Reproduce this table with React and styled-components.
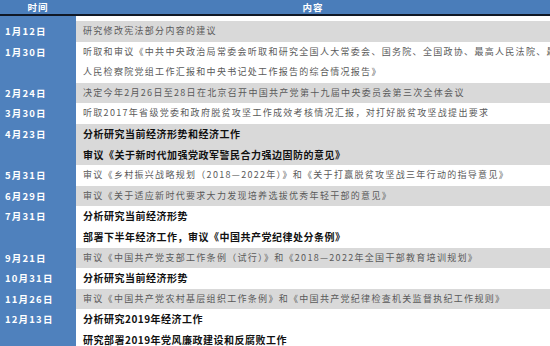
import styled, { createGlobalStyle } from "styled-components";

/** 会议内容一览表 */

const GlobalStyle = createGlobalStyle`
    html, body {
        margin: 0;
        padding: 0;
        background: #fff;
    }
    body {
        font-family: "Noto Sans CJK SC", "Liberation Sans", sans-serif;
    }
`;

const BLUE = "#4f81bd";
const DATE_W = "76px";
const LINE = "20.6px";

/**표 전체 틀 */
const Table = styled.div`
    width: 550px;
    height: 346px;
    overflow: hidden;
    display: flex;
    flex-direction: column;
`;

const HeaderRow = styled.div`
    display: grid;
    grid-template-columns: ${DATE_W} 1fr;
    height: 14px;
    background-color: #4a7dba;
    border-bottom: 2px solid #101826;
`;

const HeaderCell = styled.div`
    color: #fff;
    font-weight: 700;
    font-size: 9.5px;
    line-height: 14px;
    letter-spacing: 1px;
    text-align: center;
`;

/**왼쪽 파란 열이 끊기지 않도록 배경으로 깔아둔 본문 */
const Body = styled.div`
    flex: 1;
    padding-top: 5px;
    background: linear-gradient(to right, ${BLUE} ${DATE_W}, #fff ${DATE_W});
`;

const Row = styled.div`
    display: grid;
    grid-template-columns: ${DATE_W} 1fr;
`;

const DateCell = styled.div`
    background-color: ${BLUE};
    color: #fff;
    font-weight: 700;
    font-size: 9.5px;
    line-height: ${LINE};
    letter-spacing: 1.2px;
    padding-left: 5px;
    white-space: nowrap;
`;

const ContentCell = styled.div`
    background-color: ${(p) => (p.$shaded ? "#d9d9d9" : "#fff")};
    padding-left: 7px;
    overflow: hidden;
`;

const Line = styled.div`
    white-space: nowrap;
    line-height: ${LINE};
    color: ${(p) => (p.$bold ? "#111" : "#5a5a5a")};
    font-weight: ${(p) => (p.$bold ? 700 : 400)};
    font-size: ${(p) => (p.$bold ? "10px" : "9px")};
    letter-spacing: ${(p) => (p.$bold ? "0.5px" : "1.3px")};
`;

const rows = [
    { date: "1月12日", lines: ["研究修改宪法部分内容的建议"] },
    {
        date: "1月30日",
        lines: [
            "听取和审议《中共中央政治局常委会听取和研究全国人大常委会、国务院、全国政协、最高人民法院、最高",
            "人民检察院党组工作汇报和中央书记处工作报告的综合情况报告》",
        ],
    },
    { date: "2月24日", lines: ["决定今年2月26日至28日在北京召开中国共产党第十九届中央委员会第三次全体会议"] },
    { date: "3月30日", lines: ["听取2017年省级党委和政府脱贫攻坚工作成效考核情况汇报，对打好脱贫攻坚战提出要求"] },
    {
        date: "4月23日",
        bold: true,
        lines: ["分析研究当前经济形势和经济工作", "审议《关于新时代加强党政军警民合力强边固防的意见》"],
    },
    { date: "5月31日", lines: ["审议《乡村振兴战略规划（2018—2022年）》和《关于打赢脱贫攻坚战三年行动的指导意见》"] },
    { date: "6月29日", lines: ["审议《关于适应新时代要求大力发现培养选拔优秀年轻干部的意见》"] },
    {
        date: "7月31日",
        bold: true,
        lines: ["分析研究当前经济形势", "部署下半年经济工作，审议《中国共产党纪律处分条例》"],
    },
    { date: "9月21日", lines: ["审议《中国共产党支部工作条例（试行）》和《2018—2022年全国干部教育培训规划》"] },
    { date: "10月31日", bold: true, lines: ["分析研究当前经济形势"] },
    { date: "11月26日", lines: ["审议《中国共产党农村基层组织工作条例》和《中国共产党纪律检查机关监督执纪工作规则》"] },
    {
        date: "12月13日",
        bold: true,
        lines: ["分析研究2019年经济工作", "研究部署2019年党风廉政建设和反腐败工作"],
    },
];

const App = () => {
    return (
        <>
            <GlobalStyle />
            <Table>
                <HeaderRow>
                    <HeaderCell>时间</HeaderCell>
                    <HeaderCell>内容</HeaderCell>
                </HeaderRow>
                <Body>
                    {rows.map((row, i) => (
                        <Row key={row.date}>
                            <DateCell>{row.date}</DateCell>
                            <ContentCell $shaded={i % 2 === 0}>
                                {row.lines.map((text) => (
                                    <Line key={text} $bold={row.bold}>
                                        {text}
                                    </Line>
                                ))}
                            </ContentCell>
                        </Row>
                    ))}
                </Body>
            </Table>
        </>
    );
};

export default App;
